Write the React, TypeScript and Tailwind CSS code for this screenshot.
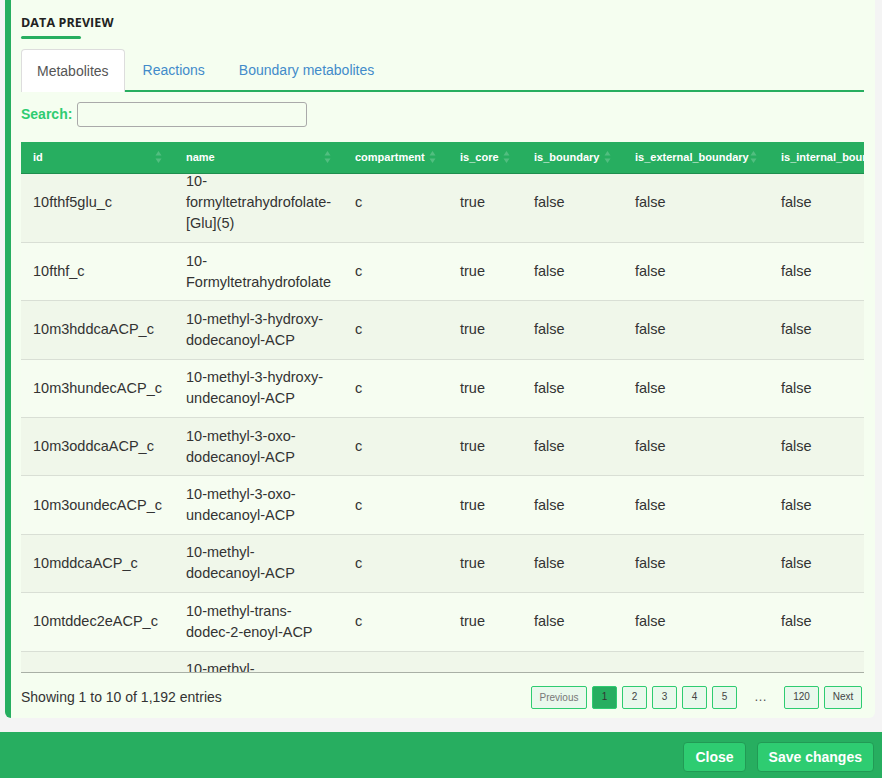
const columns = [
  { key: 'id', label: 'id', width: 'w-[153px]' },
  { key: 'name', label: 'name', width: 'w-[169px]' },
  { key: 'compartment', label: 'compartment', width: 'w-[105px]' },
  { key: 'is_core', label: 'is_core', width: 'w-[74px]' },
  { key: 'is_boundary', label: 'is_boundary', width: 'w-[101px]' },
  { key: 'is_external_boundary', label: 'is_external_boundary', width: 'w-[146px]' },
  { key: 'is_internal_boundary', label: 'is_internal_boundary', width: 'w-[160px]' },
];

const rows = [
  ['10fthf5glu_c', '10-formyltetrahydrofolate-[Glu](5)'],
  ['10fthf_c', '10-Formyltetrahydrofolate'],
  ['10m3hddcaACP_c', '10-methyl-3-hydroxy-dodecanoyl-ACP'],
  ['10m3hundecACP_c', '10-methyl-3-hydroxy-undecanoyl-ACP'],
  ['10m3oddcaACP_c', '10-methyl-3-oxo-dodecanoyl-ACP'],
  ['10m3oundecACP_c', '10-methyl-3-oxo-undecanoyl-ACP'],
  ['10mddcaACP_c', '10-methyl-dodecanoyl-ACP'],
  ['10mtddec2eACP_c', '10-methyl-trans-dodec-2-enoyl-ACP'],
  ['10mundecACP_c', '10-methyl-undecanoyl-ACP'],
  ['12dgr120_c', '1,2-diacyl-sn-glycerol (didodecanoyl, n-C12:0)'],
];

function SortIcon() {
  return (
    <svg width="7" height="14" viewBox="0 0 7 14" className="shrink-0 opacity-20">
      <path d="M3.5 1 L6.5 5.5 L0.5 5.5 Z" fill="white" />
      <path d="M3.5 13 L6.5 8.5 L0.5 8.5 Z" fill="white" />
    </svg>
  );
}

function Colgroup() {
  return (
    <colgroup>
      {columns.map((c) => (
        <col key={c.key} className={c.width} />
      ))}
    </colgroup>
  );
}

function PageButton({ label, active, wide }: { label: string; active?: boolean; wide?: string }) {
  return (
    <button
      className={`h-[23px] ${wide ?? 'w-[25px]'} rounded-[2px] border border-[#2ecc71] text-[10px] leading-none ${
        active ? 'bg-[#27ae60] text-[#333]' : 'bg-[#e9f8ec] text-[#444]'
      }`}
    >
      {label}
    </button>
  );
}

export default function App() {
  return (
    <div className="flex h-[778px] w-[882px] flex-col overflow-hidden bg-[#f4f4f4] font-['Liberation_Sans',Arial,sans-serif] text-[#333]">
      {/* card */}
      <div className="ml-[5px] mr-[7px] flex h-[718px] flex-col rounded-br-md rounded-bl-[6px] border-l-[6px] border-[#27ae60] bg-[#f5fef0] pl-[10px] pr-[11px]">
        <div className="pt-[14px]">
          <h2 className="font-['Open_Sans',sans-serif] text-[12.5px] font-bold leading-[18px] tracking-[0.1px] text-[#222]">
            DATA PREVIEW
          </h2>
          <div className="mt-[4px] h-[3px] w-[60px] rounded-full bg-[#27ae60]" />
        </div>

        {/* tabs */}
        <div className="mt-[10px] flex border-b-2 border-[#27ae60] text-[14px]">
          <div className="-mb-[2px] rounded-t-[4px] border border-b-0 border-[#ddd] bg-white px-[15px] pt-[11px] pb-[11px] leading-[20px] text-[#555]">
            Metabolites
          </div>
          <div className="ml-[2px] px-[16px] pt-[11px] pb-[9px] leading-[20px] text-[#428bca]">Reactions</div>
          <div className="ml-[2px] px-[16px] pt-[11px] pb-[9px] leading-[20px] text-[#428bca]">
            Boundary metabolites
          </div>
        </div>

        {/* search */}
        <div className="mt-[10px] flex items-center">
          <label className="text-[14px] font-bold text-[#2ecc71]">Search:</label>
          <input className="ml-[5px] h-[25px] w-[230px] rounded-[3px] border border-[#aaa] bg-transparent" />
        </div>

        {/* table */}
        <div className="mt-[15px] w-[843px] overflow-hidden">
          <table className="w-[908px] min-w-[908px] table-fixed border-collapse">
            <Colgroup />
            <thead>
              <tr className="h-[31px] border-b border-[#1e8e4e] bg-[#27ae60]">
                {columns.map((c) => (
                  <th key={c.key} className="px-[12px] text-left text-[11px] font-bold text-white">
                    <div className="flex items-center justify-between whitespace-nowrap">
                      <span>{c.label}</span>
                      <SortIcon />
                    </div>
                  </th>
                ))}
              </tr>
            </thead>
          </table>
          <div className="h-[499px] overflow-hidden border-b border-[#a9b0a6]">
            <table className="-mt-[10px] w-[908px] min-w-[908px] table-fixed border-collapse">
              <Colgroup />
              <tbody>
                {rows.map(([id, name], i) => (
                  <tr
                    key={id}
                    className={`border-b border-[#d9dfd5] text-[14.5px] leading-[21px] ${
                      i % 2 === 0 ? 'bg-[#f0f7ea]' : 'bg-[#f6fdf1]'
                    }`}
                  >
                    <td className="px-[12px] py-[7.7px]">{id}</td>
                    <td className="px-[12px] py-[7.7px]">{name}</td>
                    <td className="px-[12px] py-[7.7px]">c</td>
                    <td className="px-[12px] py-[7.7px]">true</td>
                    <td className="px-[12px] py-[7.7px]">false</td>
                    <td className="px-[12px] py-[7.7px]">false</td>
                    <td className="px-[12px] py-[7.7px] whitespace-nowrap">false</td>
                  </tr>
                ))}
              </tbody>
            </table>
          </div>
        </div>

        {/* footer info + pagination */}
        <div className="mt-[13px] flex items-center justify-between">
          <div className="text-[14px] leading-[20px]">Showing 1 to 10 of 1,192 entries</div>
          <div className="mr-[2px] flex items-center gap-[5px]">
            <button className="h-[23px] w-[56px] rounded-[2px] border border-[#2ecc71] bg-[#e9f8ec] text-[10px] text-[#777]">
              Previous
            </button>
            <PageButton label="1" active />
            <PageButton label="2" />
            <PageButton label="3" />
            <PageButton label="4" />
            <PageButton label="5" />
            <span className="w-[37px] text-center text-[13px] text-[#555]">…</span>
            <PageButton label="120" wide="w-[35px]" />
            <PageButton label="Next" wide="w-[38px]" />
          </div>
        </div>
      </div>

      {/* modal footer */}
      <div className="mt-[14px] flex h-[46px] items-center justify-end gap-[11px] bg-[#27ae60] pt-[4px] pr-[8px]">
        <button className="h-[30px] rounded-[4px] border border-[#229a55] bg-[#2ecc71] px-[11px] text-[14px] font-bold text-white">
          Close
        </button>
        <button className="h-[30px] rounded-[4px] border border-[#229a55] bg-[#2ecc71] px-[11px] text-[14px] font-bold text-white">
          Save changes
        </button>
      </div>
    </div>
  );
}
